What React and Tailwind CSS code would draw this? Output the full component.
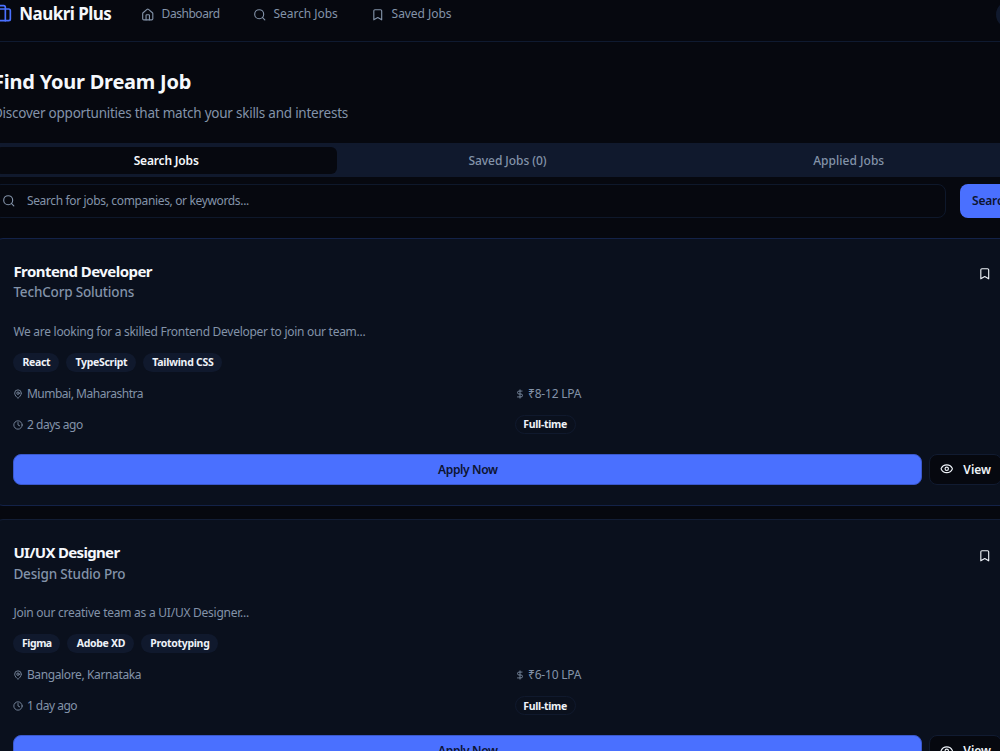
import React from 'react';
import { Bookmark, Briefcase, Clock, DollarSign, Eye, House, MapPin, Search } from 'lucide-react';

const navLinks = [
  { label: 'Dashboard', icon: House, tracking: 'tracking-[-0.46px]', width: 'w-[112px]' },
  { label: 'Search Jobs', icon: Search, tracking: 'tracking-[-0.06px]', width: 'w-[118px]' },
  { label: 'Saved Jobs', icon: Bookmark, tracking: 'tracking-[-0.05px]', width: 'w-[100px]' },
];

const tabs = [
  { label: 'Search Jobs', tracking: 'tracking-[-0.18px]', active: true },
  { label: 'Saved Jobs (0)', tracking: 'tracking-[-0.06px]' },
  { label: 'Applied Jobs', tracking: 'tracking-[0.02px]' },
];

const jobs = [
  {
    title: 'Frontend Developer',
    titleTracking: 'tracking-[-0.55px]',
    company: 'TechCorp Solutions',
    companyTracking: 'tracking-[-0.17px]',
    description: 'We are looking for a skilled Frontend Developer to join our team...',
    descriptionTracking: 'tracking-[-0.28px]',
    skills: [
      { name: 'React', style: 'w-[46px] tracking-[-0.36px]' },
      { name: 'TypeScript', style: 'w-[70px] tracking-[-0.3px]' },
      { name: 'Tailwind CSS', style: 'w-[79px] tracking-[-0.28px]' },
    ],
    location: 'Mumbai, Maharashtra',
    locationTracking: 'tracking-[-0.48px]',
    salary: '₹8-12 LPA',
    posted: '2 days ago',
    postedTracking: 'tracking-[-0.45px]',
    type: 'Full-time',
    border: 'border-[#132248]',
  },
  {
    title: 'UI/UX Designer',
    titleTracking: 'tracking-[-0.68px]',
    company: 'Design Studio Pro',
    companyTracking: 'tracking-[-0.17px]',
    description: 'Join our creative team as a UI/UX Designer...',
    descriptionTracking: 'tracking-[-0.25px]',
    skills: [
      { name: 'Figma', style: 'w-[47px] tracking-[-0.5px]' },
      { name: 'Adobe XD', style: 'w-[67px] tracking-[-0.3px]' },
      { name: 'Prototyping', style: 'w-[77px] tracking-[-0.3px]' },
    ],
    location: 'Bangalore, Karnataka',
    locationTracking: 'tracking-[-0.37px]',
    salary: '₹6-10 LPA',
    posted: '1 day ago',
    postedTracking: 'tracking-[-0.5px]',
    type: 'Full-time',
    border: 'border-[#121d35]',
  },
];

function JobCard({ job }) {
  return (
    <div className={`h-[268px] rounded-[10px] border bg-[#0a101d] pl-[19.4px] pr-[20.2px] pt-[21.5px] ${job.border}`}>
      {/* Title row */}
      <div className="flex h-[62.5px] justify-between">
        <div>
          <h3 className={`text-[15px] leading-[20px] font-bold text-[#f5f8fc] ${job.titleTracking}`}>{job.title}</h3>
          <p className={`mt-[1.8px] text-[13.5px] leading-[20px] font-medium text-[#8393a9] ${job.companyTracking}`}>{job.company}</p>
        </div>
        <button className="mr-[10.8px] mt-[6.7px] h-[13.5px] text-[#eef2f8]">
          <Bookmark size={13.5} />
        </button>
      </div>

      <p className={`text-[12px] leading-[17px] text-[#8393a9] ${job.descriptionTracking}`}>{job.description}</p>

      {/* Skills */}
      <div className="mt-[12.5px] flex gap-[7px]">
        {job.skills.map((skill) => (
          <span
            key={skill.name}
            className={`flex h-[19px] items-center justify-center whitespace-nowrap rounded-full bg-[#10192d] text-[10.5px] leading-none font-bold text-[#eef2f8] ${skill.style}`}
          >
            {skill.name}
          </span>
        ))}
      </div>

      {/* Details */}
      <div className="mt-[12.5px] grid grid-cols-2 gap-x-[14px] gap-y-[12px] text-[12px] text-[#8393a9]">
        <div className="flex h-[19px] items-center gap-[3.5px]">
          <MapPin size={10} />
          <span className={job.locationTracking}>{job.location}</span>
        </div>
        <div className="flex h-[19px] items-center gap-[3.5px]">
          <DollarSign size={10} />
          <span className="tracking-[-0.23px]">{job.salary}</span>
        </div>
        <div className="flex h-[19px] items-center gap-[3.5px]">
          <Clock size={10} />
          <span className={job.postedTracking}>{job.posted}</span>
        </div>
        <div className="flex h-[19px] items-center">
          <span className="flex h-[19px] w-[61px] items-center justify-center rounded-full border border-[#10192d] text-[10.5px] leading-none font-bold tracking-[-0.3px] text-[#eef2f8]">
            {job.type}
          </span>
        </div>
      </div>

      {/* Actions */}
      <div className="mt-[19.5px] flex gap-[7px]">
        <button className="h-[31px] flex-1 rounded-[8px] border border-[#3a58cc] bg-[#4a70ff] pt-[1px] text-[12px] font-semibold tracking-[-0.37px] text-[#0d1430]">
          Apply Now
        </button>
        <button className="flex h-[31px] w-[72.5px] items-center gap-[9.5px] rounded-[8px] border border-[#111b31] bg-[#06080f] pl-[10px] text-[12px] font-semibold text-[#eef2f8]">
          <Eye size={13.5} />
          <span className="pt-[1px]">View</span>
        </button>
      </div>
    </div>
  );
}

function App() {
  return (
    <div className="h-[751px] w-[1000px] overflow-hidden bg-[#06080f] font-['Noto_Sans',sans-serif]">
      {/* Navbar */}
      <header className="flex h-[42px] items-center border-b border-[#0f1a30] pb-[12.5px]">
        <div className="-ml-[8px] flex w-[149.3px] shrink-0 items-center gap-[7.3px] text-[#4a70ff]">
          <Briefcase size={20} />
          <span className="whitespace-nowrap text-[17px] leading-[20px] font-bold tracking-[-0.54px] text-[#f5f8fc]">Naukri Plus</span>
        </div>
        <nav className="flex shrink-0 text-[12px] text-[#8393a9]">
          {navLinks.map(({ label, icon: Icon, tracking, width }) => (
            <a key={label} href="#" className={`flex items-center gap-[6.8px] ${width}`}>
              <Icon size={13.5} />
              <span className={`whitespace-nowrap ${tracking}`}>{label}</span>
            </a>
          ))}
        </nav>
        {/* Avatar */}
        <div className="-mr-[23px] ml-auto size-[27px] shrink-0 rounded-full bg-[#10192d]" />
      </header>

      <main className="-ml-[7px] w-[1030px]">
        {/* Heading */}
        <div className="h-[101px] pt-[27px]">
          <h1 className="text-[20px] leading-[26px] font-bold tracking-[-0.23px] text-[#f5f8fc]">Find Your Dream Job</h1>
          <p className="mt-[8px] text-[13.5px] leading-[20px] tracking-[-0.24px] text-[#8393a9]">
            Discover opportunities that match your skills and interests
          </p>
        </div>

        {/* Tabs */}
        <div className="grid h-[34px] w-[1030px] grid-cols-[341.3px_341.3px_341.3px] rounded-[8px] bg-[#10192d] py-[3.5px] pl-[2.5px]">
          {tabs.map((tab) => (
            <button
              key={tab.label}
              className={`rounded-[6px] pt-[1px] text-[12px] ${tab.tracking} ${
                tab.active ? 'bg-[#06080f] font-semibold text-[#f5f8fc]' : 'font-medium text-[#8393a9]'
              }`}
            >
              {tab.label}
            </button>
          ))}
        </div>

        {/* Search bar */}
        <div className="mt-[7px] flex gap-[14px]">
          <div className="flex h-[34px] w-[953px] shrink-0 items-center gap-[11px] rounded-[8px] border border-[#0e182b] pl-[8.4px] text-[#8393a9]">
            <Search size={13.5} />
            <span className="text-[12px] tracking-[-0.35px]">Search for jobs, companies, or keywords...</span>
          </div>
          <button className="h-[34px] w-[64px] shrink-0 rounded-[8px] bg-[#4a70ff] pl-[12px] text-left text-[12px] font-semibold tracking-[-0.18px] text-[#0d1430]">
            Search
          </button>
        </div>

        {/* Job list */}
        <div className="mt-[20px] flex flex-col gap-[13.4px]">
          {jobs.map((job) => (
            <JobCard key={job.title} job={job} />
          ))}
        </div>
      </main>
    </div>
  );
}

export default App;
